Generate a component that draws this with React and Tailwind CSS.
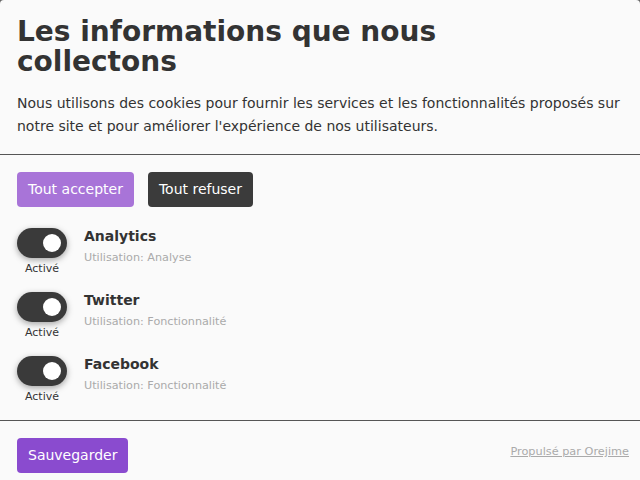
import React from "react";

const font = { fontFamily: '"DejaVu Sans", sans-serif' };

function Toggle() {
  return (
    <div className="flex flex-col items-center w-[50px] shrink-0">
      <div className="relative w-[50px] h-[30px] rounded-full bg-[#3a3a3a] shadow-[0_2px_6px_rgba(0,0,0,0.35)]">
        <div className="absolute top-[6px] right-[6px] w-[18px] h-[18px] rounded-full bg-white" />
      </div>
      <div className="text-[11px] leading-[14px] mt-[3.5px] text-[#333]">Activé</div>
    </div>
  );
}

function Purpose({ title, usage }) {
  return (
    <div className="flex gap-[17px] h-[64px]">
      <Toggle />
      <div className="flex flex-col">
        <div className="text-[14px] leading-[16px] font-bold text-[#333] mt-[0px]">{title}</div>
        <div className="text-[11.2px] leading-[14px] text-[#aaa] mt-[7px]">Utilisation: {usage}</div>
      </div>
    </div>
  );
}

export default function App() {
  return (
    <div className="w-[640px] h-[480px] bg-[#666] overflow-hidden" style={font}>
      <div className="w-full h-full bg-[#fafafa] rounded-t-[4px] flex flex-col">
        <div className="px-[17px] pt-[17px] pb-[16px]">
          <h1 className="text-[28px] leading-[30px] font-bold text-[#333] w-[430px]">
            Les informations que nous collectons
          </h1>
          <p className="text-[14px] leading-[23px] text-[#333] mt-[15px]">
            Nous utilisons des cookies pour fournir les services et les fonctionnalités proposés sur notre site et pour améliorer l'expérience de nos utilisateurs.
          </p>
        </div>
        <div className="h-px bg-[#555]" />
        <div className="px-[17px] pt-[17px] h-[265px]">
          <div className="flex gap-[14px]">
            <button className="h-[35px] px-[11px] rounded-[4px] bg-[#a874d8] text-white text-[14px]">Tout accepter</button>
            <button className="h-[35px] px-[11px] rounded-[4px] bg-[#3b3b3b] text-white text-[14px]">Tout refuser</button>
          </div>
          <div className="mt-[21px] flex flex-col">
            <Purpose title="Analytics" usage="Analyse" />
            <Purpose title="Twitter" usage="Fonctionnalité" />
            <Purpose title="Facebook" usage="Fonctionnalité" />
          </div>
        </div>
        <div className="h-px bg-[#555]" />
        <div className="pr-[11px] pl-[17px] pt-[17px] flex justify-between items-start">
          <button className="h-[35px] px-[11px] rounded-[4px] bg-[#8a4bcf] text-white text-[14px]">Sauvegarder</button>
          <a className="text-[11.3px] text-[#aaa] underline mt-[6px]">Propulsé par Orejime</a>
        </div>
      </div>
    </div>
  );
}
